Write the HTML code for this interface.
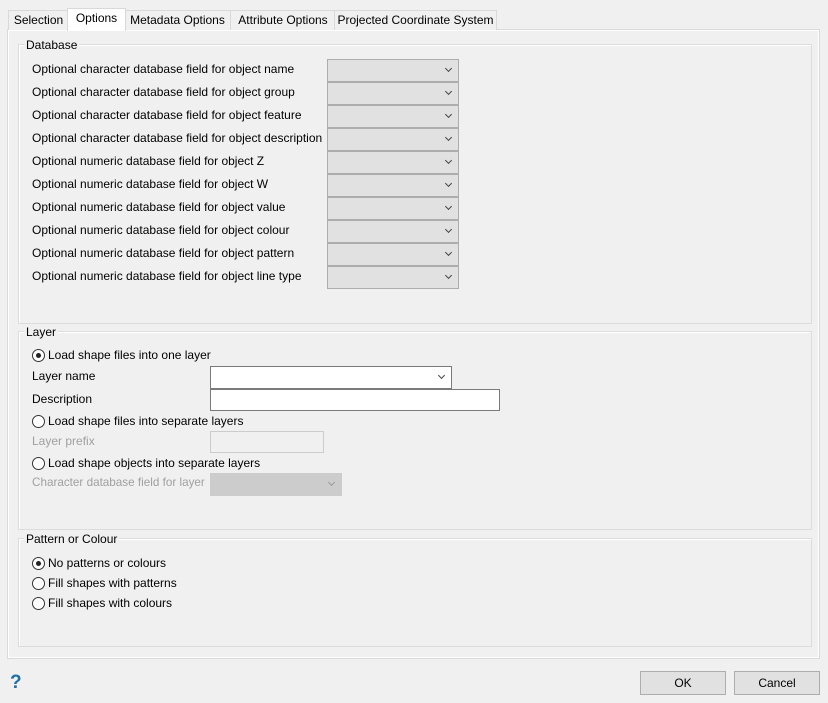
<!DOCTYPE html>
<html><head><style>
body{margin:0;width:828px;height:703px;background:#f0f0f0;font-family:"Liberation Sans",sans-serif;font-size:12px;color:#000;position:relative;overflow:hidden}
.a{position:absolute;white-space:nowrap}
.tab{position:absolute;top:10px;height:19px;border:1px solid #d9d9d9;border-bottom:none;background:#f0f0f0;text-align:center;line-height:19px}
.pane{position:absolute;left:7px;top:29px;width:811px;height:628px;border:1px solid #d9d9d9;background:#f0f0f0;box-shadow:inset 0 0 0 1px #fff}
.grp{position:absolute;border:1px solid #dcdcdc;box-shadow:inset 1px 1px 0 #fff}
.gl{position:absolute;background:#f0f0f0;padding:0 2px;line-height:14px}
.cb{position:absolute;left:327px;width:130px;height:21px;border:1px solid #adadad;background:#e1e1e1}
.chev{position:absolute;right:7px;top:6px;width:4px;height:4px;border-right:1px solid #444;border-bottom:1px solid #444;transform:rotate(45deg)}
.rd{position:absolute;width:11px;height:11px;border:1px solid #333;border-radius:50%;background:#fff}
.rd.on::after{content:"";position:absolute;left:3px;top:3px;width:5px;height:5px;border-radius:50%;background:#222}
.btn{position:absolute;top:671px;height:22px;border:1px solid #adadad;background:#e1e1e1;text-align:center;line-height:22px}
.dis{color:#a0a0a0}
</style></head><body>
<div class="pane"></div>
<div class="tab" style="left:8px;width:59px">Selection</div>
<div class="tab" style="left:124px;width:105px">Metadata Options</div>
<div class="tab" style="left:230px;width:104px">Attribute Options</div>
<div class="tab" style="left:334px;width:161px">Projected Coordinate System</div>
<div class="tab" style="left:67px;top:8px;width:57px;height:22px;background:#fff;line-height:19px">Options</div>

<div class="grp" style="left:18px;top:44px;width:792px;height:278px"></div>
<div class="gl a" style="left:24px;top:38px">Database</div>
<div class="a" style="left:32px;top:62px">Optional character database field for object name</div>
<div class="a" style="left:32px;top:85px">Optional character database field for object group</div>
<div class="a" style="left:32px;top:108px">Optional character database field for object feature</div>
<div class="a" style="left:32px;top:131px">Optional character database field for object description</div>
<div class="a" style="left:32px;top:154px">Optional numeric database field for object Z</div>
<div class="a" style="left:32px;top:177px">Optional numeric database field for object W</div>
<div class="a" style="left:32px;top:200px">Optional numeric database field for object value</div>
<div class="a" style="left:32px;top:223px">Optional numeric database field for object colour</div>
<div class="a" style="left:32px;top:246px">Optional numeric database field for object pattern</div>
<div class="a" style="left:32px;top:269px">Optional numeric database field for object line type</div>
<div class="cb" style="top:59px"><div class="chev"></div></div>
<div class="cb" style="top:82px"><div class="chev"></div></div>
<div class="cb" style="top:105px"><div class="chev"></div></div>
<div class="cb" style="top:128px"><div class="chev"></div></div>
<div class="cb" style="top:151px"><div class="chev"></div></div>
<div class="cb" style="top:174px"><div class="chev"></div></div>
<div class="cb" style="top:197px"><div class="chev"></div></div>
<div class="cb" style="top:220px"><div class="chev"></div></div>
<div class="cb" style="top:243px"><div class="chev"></div></div>
<div class="cb" style="top:266px"><div class="chev"></div></div>

<div class="grp" style="left:18px;top:331px;width:792px;height:197px"></div>
<div class="gl a" style="left:24px;top:325px">Layer</div>
<div class="rd on" style="left:32px;top:349px"></div><div class="a" style="left:48px;top:348px">Load shape files into one layer</div>
<div class="a" style="left:32px;top:369px">Layer name</div>
<div class="a" style="left:210px;top:366px;width:240px;height:21px;border:1px solid #7a7a7a;background:#fff"><div class="chev"></div></div>
<div class="a" style="left:32px;top:392px">Description</div>
<div class="a" style="left:210px;top:389px;width:288px;height:20px;border:1px solid #7a7a7a;background:#fff"></div>
<div class="rd" style="left:32px;top:415px"></div><div class="a" style="left:48px;top:414px">Load shape files into separate layers</div>
<div class="a dis" style="left:32px;top:434px">Layer prefix</div>
<div class="a" style="left:210px;top:431px;width:112px;height:20px;border:1px solid #ccc;background:#f0f0f0"></div>
<div class="rd" style="left:32px;top:457px"></div><div class="a" style="left:48px;top:456px">Load shape objects into separate layers</div>
<div class="a dis" style="left:32px;top:476px;font-size:11.7px">Character database field for layer</div>
<div class="a" style="left:210px;top:473px;width:130px;height:21px;border:1px solid #ccc;background:#ccc"><div class="chev" style="border-color:#999"></div></div>

<div class="grp" style="left:18px;top:538px;width:792px;height:107px"></div>
<div class="gl a" style="left:24px;top:532px">Pattern or Colour</div>
<div class="rd on" style="left:32px;top:557px"></div><div class="a" style="left:48px;top:556px">No patterns or colours</div>
<div class="rd" style="left:32px;top:577px"></div><div class="a" style="left:48px;top:576px">Fill shapes with patterns</div>
<div class="rd" style="left:32px;top:597px"></div><div class="a" style="left:48px;top:596px">Fill shapes with colours</div>

<div class="a" style="left:10px;top:672px;font-size:19px;font-weight:bold;color:#1e6fa8">?</div>
<div class="btn" style="left:640px;width:84px">OK</div>
<div class="btn" style="left:734px;width:84px">Cancel</div>
</body></html>
